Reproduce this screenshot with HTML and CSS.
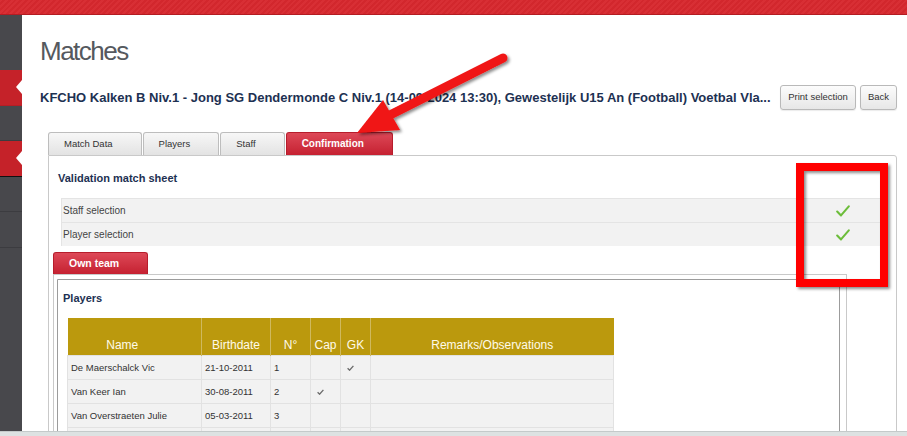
FILE: index.html
```html
<!DOCTYPE html>
<html lang="en">
<head>
<meta charset="utf-8">
<title>Matches</title>
<link rel="stylesheet" href="styles.css">
</head>
<body>
<div class="topbar"></div>
<div class="layout">
  <nav class="sidebar">
    <div class="nav-spacer"></div>
    <div class="nav-item active"></div>
    <div class="nav-item"></div>
    <div class="nav-item active dark-line"></div>
    <div class="nav-item"></div>
    <div class="nav-item"></div>
  </nav>
  <main class="main">
    <h1 class="page-title">Matches</h1>
    <div class="match-header">
      <h2 class="match-name">KFCHO Kalken B Niv.1 - Jong SG Dendermonde C Niv.1 (14-09-2024 13:30), Gewestelijk U15 An (Football) Voetbal Vla...</h2>
      <div class="actions">
        <button class="btn">Print selection</button>
        <button class="btn">Back</button>
      </div>
    </div>
    <div class="tabs">
      <div class="tab">Match Data</div>
      <div class="tab">Players</div>
      <div class="tab">Staff</div>
      <div class="tab tab-active">Confirmation</div>
    </div>
    <div class="panel">
      <h3 class="section-title">Validation match sheet</h3>
      <div class="validation">
        <div class="vrow">
          <span class="vlabel">Staff selection</span>
          <svg class="vcheck" width="14" height="12" viewBox="0 0 14 12"><path d="M1.2 6.6 L5 10.4 L12.8 1.4" fill="none" stroke="#6cbd3a" stroke-width="2.1" stroke-linecap="round" stroke-linejoin="round"/></svg>
        </div>
        <div class="vrow">
          <span class="vlabel">Player selection</span>
          <svg class="vcheck" width="14" height="12" viewBox="0 0 14 12"><path d="M1.2 6.6 L5 10.4 L12.8 1.4" fill="none" stroke="#6cbd3a" stroke-width="2.1" stroke-linecap="round" stroke-linejoin="round"/></svg>
        </div>
      </div>
      <div class="subtabs">
        <div class="tab tab-active tab-team">Own team</div>
      </div>
      <div class="subpanel">
        <div class="inner">
          <h3 class="section-title players-title">Players</h3>
          <table class="players">
            <thead>
              <tr>
                <th class="col-name">Name</th>
                <th class="col-birth">Birthdate</th>
                <th class="col-nr">N°</th>
                <th class="col-cap">Cap</th>
                <th class="col-gk">GK</th>
                <th class="col-rem">Remarks/Observations</th>
              </tr>
            </thead>
            <tbody>
              <tr>
                <td>De Maerschalck Vic</td><td>21-10-2011</td><td>1</td><td></td>
                <td class="mark"><svg width="7" height="6" viewBox="0 0 7 6"><path d="M0.6 3.2 L2.6 5.2 L6.4 0.8" fill="none" stroke="#6a6a6a" stroke-width="1.3"/></svg></td><td></td>
              </tr>
              <tr>
                <td>Van Keer Ian</td><td>30-08-2011</td><td>2</td>
                <td class="mark"><svg width="7" height="6" viewBox="0 0 7 6"><path d="M0.6 3.2 L2.6 5.2 L6.4 0.8" fill="none" stroke="#6a6a6a" stroke-width="1.3"/></svg></td><td></td><td></td>
              </tr>
              <tr>
                <td>Van Overstraeten Julie</td><td>05-03-2011</td><td>3</td><td></td><td></td><td></td>
              </tr>
              <tr>
                <td>&nbsp;</td><td></td><td></td><td></td><td></td><td></td>
              </tr>
            </tbody>
          </table>
        </div>
      </div>
    </div>
  </main>
</div>
<div class="statusbar"></div>
<svg class="annotations" width="907" height="436" viewBox="0 0 907 436">
  <defs>
    <filter id="sh" x="-20%" y="-20%" width="140%" height="140%">
      <feDropShadow dx="2" dy="2" stdDeviation="1.5" flood-color="#000" flood-opacity="0.45"/>
    </filter>
  </defs>
  <g filter="url(#sh)">
    <line x1="503" y1="58" x2="388" y2="116" stroke="#f01414" stroke-width="9" stroke-linecap="round"/>
    <polygon points="357,133 383,100 400,130" fill="#f01414"/>
  </g>
  <rect x="800" y="167" width="84" height="116" fill="none" stroke="#ff0000" stroke-width="8" filter="url(#sh)"/>
</svg>
</body>
</html>
```

FILE: styles.css
```css
html, body {
  margin: 0;
  padding: 0;
  height: 100%;
  overflow: hidden;
}

body {
  position: relative;
  background: #ffffff;
  font-family: "Liberation Sans", Arial, sans-serif;
  font-size: 10px;
  color: #333333;
}

.topbar {
  height: 14px;
  border-bottom: 1px solid #b31c22;
  background-color: #d7282e;
  background-image: repeating-linear-gradient(135deg, rgba(255,255,255,0.03) 0 2px, rgba(0,0,0,0.025) 2px 4px);
}

.layout {
  display: flex;
  height: calc(100% - 15px);
}

.sidebar {
  width: 22px;
  flex: 0 0 22px;
  background: #48484c;
  display: flex;
  flex-direction: column;
}

.nav-spacer {
  height: 55px;
}

.nav-item {
  position: relative;
  height: 34.5px;
  border-bottom: 1px solid #3c3c40;
}

.nav-item.active {
  background: #c52229;
  border-bottom-color: #b51e25;
}

.nav-item.active::after {
  content: "";
  position: absolute;
  right: 0;
  top: 50%;
  margin-top: -7px;
  border-right: 6px solid #ffffff;
  border-top: 7px solid transparent;
  border-bottom: 7px solid transparent;
}

.nav-item.dark-line {
  border-bottom-color: #111111;
}

.main {
  flex: 1;
  min-width: 0;
  padding: 0 10px 0 18px;
}

.page-title {
  margin: 21px 0 0 0;
  font-size: 26px;
  line-height: 30px;
  font-weight: normal;
  letter-spacing: -1.5px;
  color: #55595e;
}

.match-header {
  margin-top: 19px;
  height: 25px;
  display: flex;
  align-items: center;
  justify-content: space-between;
}

.match-name {
  margin: 0;
  font-size: 13px;
  line-height: 16px;
  font-weight: bold;
  color: #1d3152;
  white-space: nowrap;
}

.actions {
  display: flex;
  gap: 4px;
}

.btn {
  height: 25px;
  padding: 0 7px 2px;
  font-family: "Liberation Sans", Arial, sans-serif;
  font-size: 9.5px;
  color: #333333;
  background: linear-gradient(#fcfcfc, #e7e7e7);
  border: 1px solid #b9b9b9;
  border-radius: 3px;
  box-shadow: 0 1px 1px rgba(0,0,0,0.08);
}

.tabs {
  margin: 22px 0 0 8px;
  display: flex;
  gap: 1px;
}

.tab {
  height: 22px;
  line-height: 22px;
  padding: 0 28px 0 15px;
  border: 1px solid #bdbdbd;
  border-bottom: none;
  border-radius: 3px 3px 0 0;
  background: linear-gradient(#f7f7f7, #e3e3e3);
  font-size: 9.5px;
  color: #333333;
  white-space: nowrap;
}

.tab-active {
  background: linear-gradient(#dd4857, #c52131);
  border-color: #b71d2c;
  color: #ffffff;
  font-weight: bold;
  font-size: 10px;
}

.panel {
  margin-left: 8px;
  padding: 0 4px 80px;
  border: 1px solid #c9c9c9;
  border-radius: 0 3px 0 0;
}

.section-title {
  margin: 15px 0 0 5px;
  font-size: 11px;
  line-height: 14px;
  font-weight: bold;
  color: #1d3152;
}

.validation {
  margin: 13px 10px 0 8px;
}

.vrow {
  height: 23px;
  border-top: 1px solid #e4e4e4;
  border-left: 1px solid #e4e4e4;
  background: #f2f2f2;
  display: flex;
  align-items: center;
  justify-content: space-between;
}

.vlabel {
  padding-left: 1px;
  font-size: 10px;
  color: #444444;
}

.vcheck {
  margin-right: 32px;
}

.subtabs {
  margin-top: 6px;
  display: flex;
}

.tab-team {
  height: 21px;
  line-height: 21px;
  font-size: 10.5px;
}

.subpanel {
  margin-right: 45px;
  padding: 4px 6px 0 3px;
  border: 1px solid #c9c9c9;
}

.inner {
  border: 1px solid #9c9c9c;
  border-radius: 0 3px 0 0;
  padding: 0 0 60px 5px;
}

.players-title {
  margin: 11px 0 0 0;
}

.players {
  margin: 13px 0 0 4px;
  width: 546px;
  border-collapse: collapse;
  table-layout: fixed;
}

.players th {
  height: 37px;
  padding: 0 0 3px;
  background: #bb990d;
  border-left: 1px solid #cfb95e;
  border-right: 1px solid #cfb95e;
  color: #fffbe9;
  font-size: 12px;
  font-weight: normal;
  text-align: center;
  vertical-align: bottom;
  box-sizing: border-box;
}

.players th:first-child {
  border-left: none;
}

.players th:last-child {
  border-right: none;
}

.col-name { width: 134px; padding-right: 24px !important; }
.col-birth { width: 69px; }
.col-nr { width: 40px; }
.col-cap { width: 30px; }
.col-gk { width: 30px; }
.col-rem { width: 243px; }

.players td {
  height: 24px;
  padding: 0 3px;
  background: #f2f2f2;
  border: 1px solid #e2e2e2;
  font-size: 9.5px;
  color: #333333;
  white-space: nowrap;
  box-sizing: border-box;
}

.players td.mark {
  padding-left: 6px;
}

.statusbar {
  position: fixed;
  left: 0;
  right: 0;
  bottom: 0;
  height: 4px;
  background: #dde2e2;
  border-top: 1px solid #c4caca;
}

.annotations {
  position: absolute;
  top: 0;
  left: 0;
  pointer-events: none;
}
```
